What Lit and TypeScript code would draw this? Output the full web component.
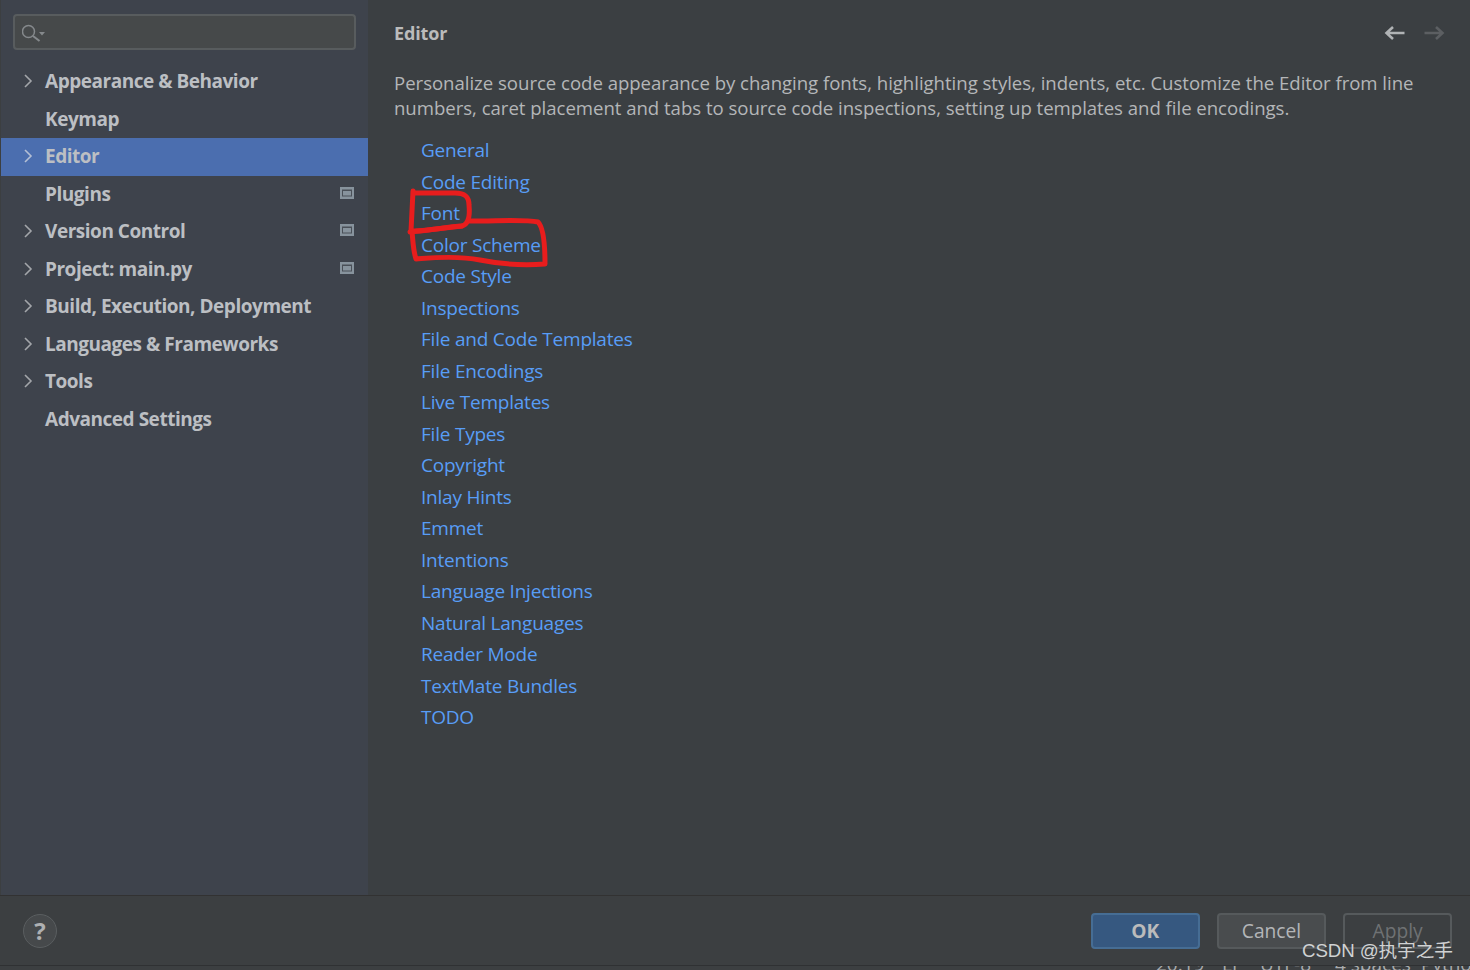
import { LitElement, html, css, svg } from "lit";
import { customElement } from "lit/decorators.js";

const NAV = [
  { t: "Appearance & Behavior", c: true },
  { t: "Keymap" },
  { t: "Editor", c: true, sel: true },
  { t: "Plugins", b: true },
  { t: "Version Control", c: true, b: true },
  { t: "Project: main.py", c: true, b: true },
  { t: "Build, Execution, Deployment", c: true },
  { t: "Languages & Frameworks", c: true },
  { t: "Tools", c: true },
  { t: "Advanced Settings" },
];
const LINKS = ["General","Code Editing","Font","Color Scheme","Code Style","Inspections","File and Code Templates","File Encodings","Live Templates","File Types","Copyright","Inlay Hints","Emmet","Intentions","Language Injections","Natural Languages","Reader Mode","TextMate Bundles","TODO"];

@customElement("app-root")
export class AppRoot extends LitElement {
  static styles = css`
    :host { display: block; width: 1470px; height: 970px; overflow: hidden; position: relative; background: #3c3f41;
      font-family: "Open Sans", "Noto Sans", sans-serif; color: #bbbbbb; }
    .main { display: flex; height: 895px; }
    .side { width: 367px; margin-left: 1px; background: #3e434c; flex: none; box-sizing: border-box; padding-top: 14px; }
    .search { margin: 0 12px 0 12px; height: 36px; box-sizing: border-box; border: 2px solid #585c5e; border-radius: 4px; background: #46494a; display: flex; align-items: center; padding-left: 7px; }
    .nav { margin-top: 13px; }
    .row { height: 37.5px; box-sizing: border-box; padding-bottom: 1px; display: flex; align-items: center; font-size: 19px; font-weight: 700; letter-spacing: -0.47px; color: #bcbfc3; position: relative; padding-left: 44px; }
    .row.sel { background: #4b6eaf; }
    .chev { position: absolute; left: 21px; top: 10px; }
    .badge { position: absolute; left: 339px; top: 11px; }
    .content { flex: 1; padding: 0 0 0 26px; position: relative; background: #3b3f42; }
    .head { height: 66px; display: flex; align-items: center; justify-content: space-between; font-size: 18px; font-weight: 700; letter-spacing: -0.12px; padding-right: 25px; color: #bbbbbb; }
    .arrows { display: flex; gap: 19px; }
    .desc { font-size: 18.6px; line-height: 25px; letter-spacing: -0.03px; color: #b4b6b8; width: 1050px; margin-top: 4px; }
    .links { margin: 15px 0 0 27px; display: flex; flex-direction: column; }
    .links a { height: 31.5px; line-height: 31.5px; font-size: 19px; letter-spacing: -0.22px; color: #589df6; }
    .foot { height: 70px; border-top: 1px solid #323232; box-sizing: border-box; display: flex; align-items: center; justify-content: space-between; padding: 0 18px 0 23px; background: #3c3f41; }
    .help { width: 34px; height: 34px; border-radius: 50%; border: 1px solid #5a5e60; background: #46494b; box-sizing: border-box; display: flex; align-items: center; justify-content: center; font-size: 24px; font-weight: 700; color: #aeb0b2; }
    .btns { display: flex; gap: 17.5px; }
    .btn { width: 108.7px; height: 36px; box-sizing: border-box; border-radius: 4px; border: 2px solid #565a5c; background: #494c4e; display: flex; align-items: center; justify-content: center; font-size: 19.2px; color: #b4b6b8; }
    .btn.ok { background: #365880; border-color: #466d94; font-weight: 700; color: #bbbbbb; }
    .btn.off { background: #3c3f41; color: #6f7274; }
    .status { height: 5px; background: #3c3f41; border-top: 1px solid #2f3133; overflow: hidden; position: relative; }
    .status span { position: absolute; top: -15px; font-size: 19px; color: #a9abad; white-space: nowrap; }
    .mark { position: absolute; left: 1302px; top: 935px; font-family: "Liberation Sans", "Noto Sans CJK SC", sans-serif; font-size: 18.7px; letter-spacing: -0.1px; color: #d0d2d3; white-space: nowrap; }
    .ink { position: absolute; left: 0; top: 0; pointer-events: none; }
  `;

  render() {
    return html`
      <div class="main">
        <div class="side">
          <div class="search">
            <svg width="26" height="20" viewBox="0 0 26 20" fill="none">
              <circle cx="6.5" cy="9.5" r="6" stroke="#85898c" stroke-width="1.5"/>
              <path d="M11 14 L17.5 19" stroke="#85898c" stroke-width="2"/>
              <path d="M17 10 h6 l-3 3.5 z" fill="#85898c"/>
            </svg>
          </div>
          <div class="nav">
            ${NAV.map(n => html`
              <div class="row ${n.sel ? "sel" : ""}">
                ${n.c ? html`<svg class="chev" width="12" height="16" viewBox="0 0 12 16" fill="none"><path d="M3 2 L9 8 L3 14" stroke="${n.sel ? "#b4bfd4" : "#a3a6aa"}" stroke-width="1.6"/></svg>` : ""}
                ${n.t}
                ${n.b ? html`<svg class="badge" width="14" height="12" viewBox="0 0 14 12"><rect width="14" height="12" fill="#87939d"/><rect x="2" y="2.5" width="10" height="7" fill="#4a5058"/><rect x="3" y="4" width="8" height="4.5" fill="#87939d"/></svg>` : ""}
              </div>`)}
          </div>
        </div>
        <div class="content">
          <div class="head">
            <span>Editor</span>
            <div class="arrows">
              <svg width="21" height="16" viewBox="0 0 21 16" fill="none"><path d="M20.5 8 H3 M9 2 L2.5 8 L9 14" stroke="#b0b3b5" stroke-width="2.6"/></svg>
              <svg width="21" height="16" viewBox="0 0 21 16" fill="none"><path d="M0.5 8 H18 M12 2 L18.5 8 L12 14" stroke="#5c5f62" stroke-width="2.6"/></svg>
            </div>
          </div>
          <div class="desc">Personalize source code appearance by changing fonts, highlighting styles, indents, etc. Customize the Editor from line numbers, caret placement and tabs to source code inspections, setting up templates and file encodings.</div>
          <div class="links">${LINKS.map(l => html`<a>${l}</a>`)}</div>
        </div>
      </div>
      <div class="foot">
        <div class="help">?</div>
        <div class="btns">
          <div class="btn ok">OK</div>
          <div class="btn">Cancel</div>
          <div class="btn off">Apply</div>
        </div>
      </div>
      <div class="status">
        <span style="left:1156px">20:19</span><span style="left:1222px">LF</span><span style="left:1260px">UTF-8</span><span style="left:1335px">4 spaces</span><span style="left:1421px">Python</span>
      </div>
      <svg class="ink" width="1470" height="970" viewBox="0 0 1470 970" fill="none">
        ${svg`<path d="M413 191 L411 231 C425 232 445 227 462 226 C469 224 470 215 469 205 C469 196 464 193 455 193 L414 193" stroke="#e81d1d" stroke-width="5" stroke-linecap="round" stroke-linejoin="round"/>
        <path d="M410 232 L462 226 M469 221 C500 221 525 219 538 222 C544 228 545 250 545 264 C520 266 500 264 480 260 C455 255 430 258 416 259 C413 250 413 240 412 232" stroke="#e81d1d" stroke-width="5" stroke-linecap="round" stroke-linejoin="round"/>`}
      </svg>
      <div class="mark">CSDN @执宇之手</div>
    `;
  }
}
